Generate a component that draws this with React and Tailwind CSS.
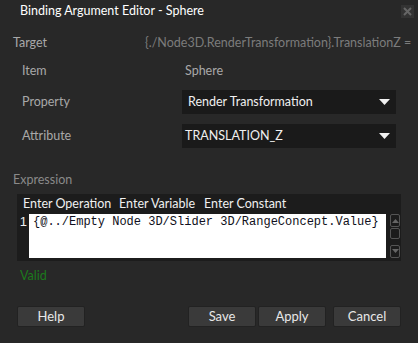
import React from "react";

const F = { fontFamily: 'Lato, "Open Sans", sans-serif' };

function Arrow() {
  return (
    <svg width="11" height="7" viewBox="0 0 11 7" className="mr-[3px] shrink-0">
      <polygon points="0,0 11,0 5.5,6" fill="#f0f0f0" />
    </svg>
  );
}

function Btn({ children }) {
  return (
    <div className="w-[68px] h-[21px] shrink-0 rounded-[2px] bg-[#3a3a3a] border border-[#222] flex items-center justify-center text-[13px] text-[#e8e8e8]">
      {children}
    </div>
  );
}

export default function App() {
  return (
    <div style={F} className="w-[418px] h-[343px] bg-[#282828] flex flex-col overflow-hidden text-[12.5px]">
      <div className="h-[22px] flex items-center justify-between pl-[20px] pr-[4px]">
        <span className="text-white">Binding Argument Editor - Sphere</span>
        <div className="w-[13px] h-[13px] bg-[#333] flex items-center justify-center mt-[1px]">
          <svg width="9" height="9" viewBox="0 0 9 9">
            <path d="M1 1 L8 8 M8 1 L1 8" stroke="#666" strokeWidth="2" />
          </svg>
        </div>
      </div>

      <div className="mt-[12px] h-[18px] flex items-center pl-[13px] whitespace-nowrap">
        <span className="w-[132px] shrink-0 text-[#a8a8a8]">Target</span>
        <span className="text-[#7c7c7c]">{"{./Node3D.RenderTransformation}.TranslationZ ="}</span>
      </div>

      <div className="mt-[10px] h-[18px] flex items-center pl-[22px]">
        <span className="w-[163px] shrink-0 text-[#a8a8a8]">Item</span>
        <span className="text-[#a8a8a8]">Sphere</span>
      </div>

      <div className="mt-[10px] h-[24px] flex items-center pl-[22px]">
        <span className="w-[160px] shrink-0 text-[#a8a8a8]">Property</span>
        <div className="w-[214px] h-[24px] bg-[#1a1a1a] flex items-center justify-between pl-[6px] pr-[3px]">
          <span className="text-[#f0f0f0]">Render Transformation</span>
          <Arrow />
        </div>
      </div>

      <div className="mt-[10px] h-[24px] flex items-center pl-[22px]">
        <span className="w-[160px] shrink-0 text-[#a8a8a8]">Attribute</span>
        <div className="w-[214px] h-[24px] bg-[#1a1a1a] flex items-center justify-between pl-[3px] pr-[3px]">
          <span className="text-[#f0f0f0]">TRANSLATION_Z</span>
          <Arrow />
        </div>
      </div>

      <div className="mt-[23px] h-[18px] flex items-center pl-[13px] text-[#8a8a8a]">
        Expression
      </div>

      <div className="mt-[5px] ml-[17px] w-[384px] h-[67px] bg-[#1c1c1c] flex flex-col">
        <div className="h-[20px] flex items-center pl-[6px] text-[#f0f0f0] whitespace-nowrap">
          <span className="w-[96px] shrink-0">Enter Operation</span>
          <span className="w-[85px] shrink-0">Enter Variable</span>
          <span>Enter Constant</span>
        </div>
        <div className="flex h-[44px]">
          <div className="w-[12px] shrink-0 text-right pr-[2px] text-[13px] text-[#f0f0f0] leading-[16px]" style={{ fontFamily: '"Liberation Sans", sans-serif' }}>1</div>
          <div
            className="w-[357px] shrink-0 h-[44px] bg-white text-[12px] leading-[16px] text-[#101020] pl-[4px] whitespace-nowrap overflow-hidden"
            style={{ fontFamily: '"Liberation Mono", monospace' }}
          >
            {"{@../Empty Node 3D/Slider 3D/RangeConcept.Value}"}
          </div>
          <div className="ml-[4px] w-[10px] shrink-0 flex flex-col">
            <div className="h-[14px] border border-[#555] rounded-[2px] flex items-center justify-center">
              <svg width="7" height="4" viewBox="0 0 7 4"><polygon points="0,4 7,4 3.5,0" fill="#666" /></svg>
            </div>
            <div className="mt-[1px] h-[11px] border border-[#555] rounded-[2px]" />
            <div className="mt-[6px] h-[14px] border border-[#555] rounded-[2px] flex items-center justify-center">
              <svg width="7" height="4" viewBox="0 0 7 4"><polygon points="0,0 7,0 3.5,4" fill="#666" /></svg>
            </div>
          </div>
        </div>
      </div>

      <div className="mt-[6px] h-[18px] flex items-center pl-[20px] text-[#1c7a1c]">Valid</div>

      <div className="mt-[21px] flex pl-[17px]">
        <Btn>Help</Btn>
        <div className="ml-[103px] flex">
          <Btn>Save</Btn>
          <div className="ml-[2px]"><Btn>Apply</Btn></div>
          <div className="ml-[7px]"><Btn>Cancel</Btn></div>
        </div>
      </div>
    </div>
  );
}
